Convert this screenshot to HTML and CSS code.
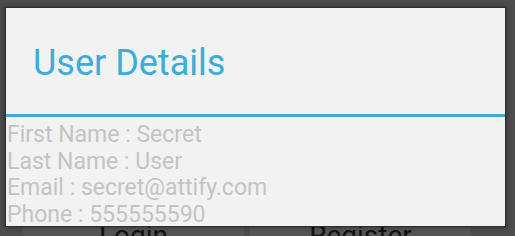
FILE: index.html
```html
<!DOCTYPE html>
<html lang="en">
<head>
    <meta charset="UTF-8">
    <title>User Details</title>
    <link rel="stylesheet" href="styles.css">
</head>
<body>
    <div class="screen">
        <div class="buttons">
            <div class="btn">Login</div>
            <div class="btn">Register</div>
        </div>
    </div>

    <!-- Dialog shown on top of the activity -->
    <div class="dialog">
        <h1 class="dialog-title">User Details</h1>
        <div class="dialog-body">
            <p>First Name : Secret</p>
            <p>Last Name : User</p>
            <p>Email : secret@attify.com</p>
            <p>Phone : 555555590</p>
        </div>
    </div>
</body>
</html>
```

FILE: styles.css
```css
/* Page */
body {
    margin: 0;
    width: 515px;
    height: 236px;
    overflow: hidden;
    position: relative;
    background: #4d4d4d;
    font-family: Roboto, "Liberation Sans", sans-serif;
}

/* Activity behind the dialog */
.screen {
    height: 236px;
    display: flex;
    flex-direction: column;
    justify-content: flex-end;
}

.buttons {
    display: flex;
    gap: 6px;
    padding: 0 44px 0 23px;
    height: 16px;
    overflow: hidden;
}

.btn {
    flex: 1;
    background: #555;
    color: #111;
    font-size: 28px;
    line-height: 1;
    text-align: center;
    padding-top: 2px;
}

/* Dialog */
.dialog {
    position: absolute;
    left: 6px;
    top: 8px;
    width: 499px;
    height: 218px;
    background: #f2f2f2;
    box-shadow: 0 0 0 1px #2e2e2e, 0 0 4px 2px rgba(0, 0, 0, 0.35);
}

.dialog-title {
    margin: 0;
    height: 109px;
    padding-left: 27px;
    padding-top: 3px;
    box-sizing: border-box;
    display: flex;
    align-items: center;
    font-size: 36px;
    font-weight: normal;
    color: #3aaed8;
    border-bottom: 3px solid #3aaed8;
}

.dialog-body {
    padding: 5px 0 0 1px;
}

.dialog-body p {
    margin: 0;
    font-size: 23px;
    line-height: 26.7px;
    color: #c4c4c4;
}
```
